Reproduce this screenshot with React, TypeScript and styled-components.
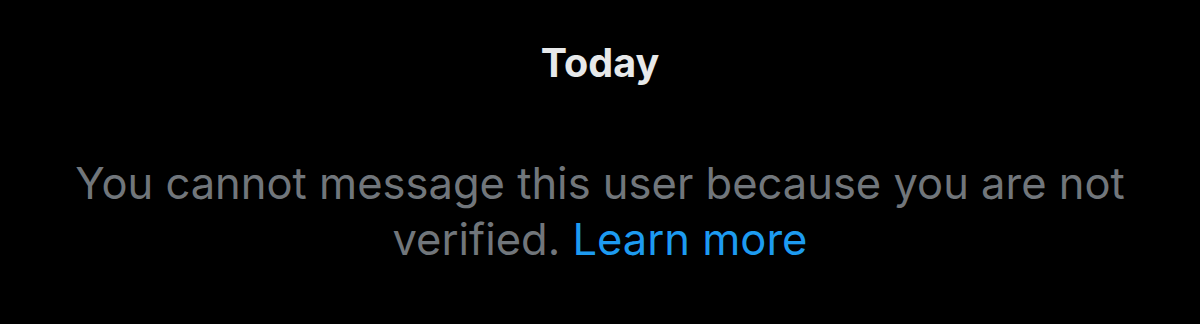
import React from "react";
import styled, { createGlobalStyle } from "styled-components";

const Global = createGlobalStyle`
  html, body { margin: 0; padding: 0; background: #000; }
  body { width: 1200px; height: 324px; overflow: hidden; font-family: Inter, "Noto Sans", sans-serif; }
`;

const Page = styled.div`
  width: 1200px;
  height: 324px;
  background: #000;
  display: flex;
  flex-direction: column;
  align-items: center;
  padding-top: 39px;
  box-sizing: border-box;
`;

const DateLabel = styled.div`
  color: #e7e9ea;
  font-size: 39.5px;
  font-weight: 700;
  line-height: 48px;
`;

const Notice = styled.p`
  margin: 68px 0 0;
  width: 1120px;
  text-align: center;
  color: #71767b;
  font-size: 43.5px;
  line-height: 56px;
  font-weight: 400;
`;

const Link = styled.a`
  color: #1d9bf0;
  text-decoration: none;
`;

export default function App() {
  return (
    <>
      <Global />
      <Page>
        <DateLabel>Today</DateLabel>
        <Notice>
          You cannot message this user because you are not verified.{" "}
          <Link href="#">Learn more</Link>
        </Notice>
      </Page>
    </>
  );
}
